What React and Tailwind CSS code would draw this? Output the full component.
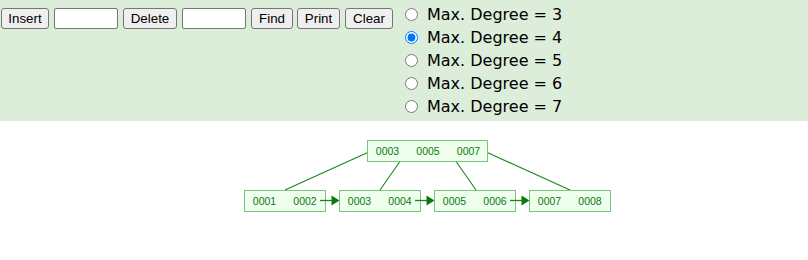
import React from "react";

const btn =
    "h-[21px] rounded-[3px] border border-[#767676] bg-[#efefef] text-[13.33px] leading-none text-black flex items-center justify-center";
const field =
    "h-[21px] w-[64px] rounded-[2px] border border-[#767676] bg-white";

const degrees = [3, 4, 5, 6, 7];

const leaves = [
    { x: 244.5, keys: ["0001", "0002"] },
    { x: 339.5, keys: ["0003", "0004"] },
    { x: 434.5, keys: ["0005", "0006"] },
    { x: 529.5, keys: ["0007", "0008"] },
];

function Tree() {
    return (
        <svg width="808" height="139" viewBox="0 121 808 139" className="block">
            {/* edges from root */}
            <g stroke="#1a861a" strokeWidth="1.1">
                <line x1="371" y1="151" x2="285" y2="190" />
                <line x1="408" y1="150" x2="380" y2="190" />
                <line x1="448" y1="150" x2="476" y2="190" />
                <line x1="484" y1="151" x2="570" y2="190" />
            </g>
            <rect x="367.5" y="140.5" width="120" height="21" fill="#eeffee" stroke="#7cc47c" />
            {["0003", "0005", "0007"].map((k, i) => (
                <text
                    key={k}
                    x={387.5 + i * 40.5}
                    y="151"
                    textAnchor="middle"
                    dominantBaseline="central"
                    fill="#0a7a0a"
                    fontSize="10.5"
                    fontFamily="'Liberation Sans', Arial, sans-serif"
                >
                    {k}
                </text>
            ))}
            {leaves.map((leaf, i) => (
                <g key={i}>
                    <rect x={leaf.x} y="190.5" width="81" height="21" fill="#eeffee" stroke="#7cc47c" />
                    {leaf.keys.map((k, j) => (
                        <text
                            key={k}
                            x={leaf.x + 20 + j * 40.5}
                            y="201"
                            textAnchor="middle"
                            dominantBaseline="central"
                            fill="#0a7a0a"
                            fontSize="10.5"
                            fontFamily="'Liberation Sans', Arial, sans-serif"
                        >
                            {k}
                        </text>
                    ))}
                    {i < 3 && (
                        <>
                            <line x1={leaf.x + 75.5} y1="200.5" x2={leaf.x + 88} y2="200.5" stroke="#1a861a" strokeWidth="1.3" />
                            <polygon
                                points={`${leaf.x + 87},195.5 ${leaf.x + 95},200.5 ${leaf.x + 87},205.5`}
                                fill="#0a7a0a"
                            />
                        </>
                    )}
                </g>
            ))}
        </svg>
    );
}

export default function App() {
    return (
        <div className="w-[808px] h-[260px] bg-white overflow-hidden">
            <div className="h-[121px] bg-[#dcedda] flex items-start">
                <div className="flex items-center pt-[8px] pl-[1px] gap-[5px] font-['Liberation_Sans',Arial,sans-serif]">
                    <button className={`${btn} w-[48px]`}>Insert</button>
                    <input className={field} />
                    <button className={`${btn} w-[54px]`}>Delete</button>
                    <input className={field} />
                    <button className={`${btn} w-[42px]`}>Find</button>
                    <button className={`${btn} w-[43px] -ml-[1px]`}>Print</button>
                    <button className={`${btn} w-[48px]`}>Clear</button>
                </div>
                <div className="flex flex-col pt-[3px] ml-[12px] font-['DejaVu_Sans',Verdana,sans-serif] text-[16px] text-black">
                    {degrees.map((d) => (
                        <label key={d} className="h-[23px] flex items-center">
                            <input
                                type="radio"
                                name="degree"
                                defaultChecked={d === 4}
                                className="m-0 w-[13px] h-[13px]"
                            />
                            <span className="ml-[9px] leading-none">Max. Degree = {d}</span>
                        </label>
                    ))}
                </div>
            </div>
            <Tree />
        </div>
    );
}
